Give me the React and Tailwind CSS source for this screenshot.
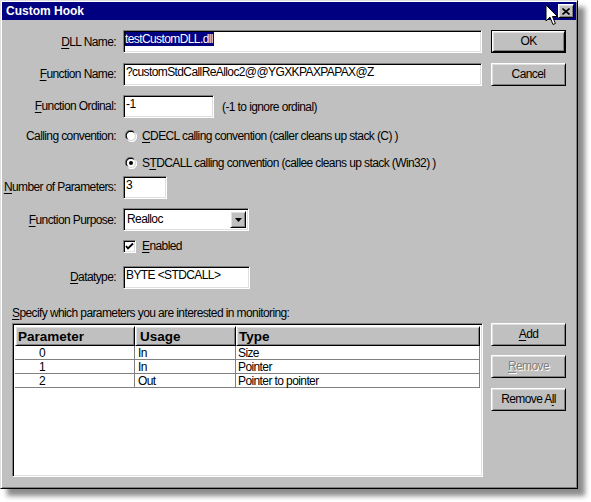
import React from 'react';

const sunken =
  'bg-white border border-t-[#808080] border-l-[#808080] border-r-white border-b-white shadow-[inset_1px_1px_0_#000,inset_-1px_-1px_0_#dfdfdf]';
const raised =
  'bg-[#c0c0c0] border border-t-white border-l-white border-r-black border-b-black shadow-[inset_1px_1px_0_#dfdfdf,inset_-1px_-1px_0_#808080]';

function U({ children }) {
  return <span className="underline underline-offset-2 decoration-1">{children}</span>;
}

function Label({ children, className = '' }) {
  return <div className={`w-[114px] shrink-0 text-right whitespace-nowrap ${className}`}>{children}</div>;
}

function Button({ children, disabled, isDefault, className = '' }) {
  const inner = (
    <div
      className={`${raised} w-full h-full flex items-center justify-center ${
        disabled ? 'text-[#808080] [text-shadow:1px_1px_0_#fff]' : 'text-black'
      }`}
    >
      {children}
    </div>
  );
  if (isDefault) {
    return <div className={`w-[75px] h-[23px] border border-black ${className}`}>{inner}</div>;
  }
  return <div className={`w-[75px] h-[23px] ${className}`}>{inner}</div>;
}

function Radio({ checked }) {
  return (
    <svg width="12" height="12" viewBox="0 0 12 12" className="shrink-0">
      <path d="M1.5 8.5 A5 5 0 0 1 8.5 1.5" stroke="#808080" strokeWidth="1.2" fill="none" />
      <path d="M2.6 8.8 A4 4 0 0 1 8.8 2.6" stroke="#000" strokeWidth="1.2" fill="none" />
      <circle cx="6" cy="6" r="4" fill="#fff" />
      <path d="M10.5 3.5 A5 5 0 0 1 3.5 10.5" stroke="#fff" strokeWidth="1.2" fill="none" />
      <path d="M9.4 3.2 A4 4 0 0 1 3.2 9.4" stroke="#dfdfdf" strokeWidth="1.2" fill="none" />
      {checked && <circle cx="6" cy="6" r="2" fill="#000" />}
    </svg>
  );
}

function Checkbox() {
  return (
    <div className={`${sunken} w-[13px] h-[13px] shrink-0 flex items-center justify-center`}>
      <svg width="9" height="9" viewBox="0 0 9 9">
        <path d="M1 4 L3 6.5 L8 1.5" stroke="#000" strokeWidth="1.8" fill="none" />
      </svg>
    </div>
  );
}

function TitleBar() {
  return (
    <div className="h-[18px] bg-[#000080] flex items-center justify-between pl-[4px] pr-[2px]">
      <span className="text-white font-bold text-[12px] tracking-normal">Custom Hook</span>
      <div className={`${raised} w-[16px] h-[14px] flex items-center justify-center`}>
        <svg width="8" height="7" viewBox="0 0 8 7">
          <path d="M0.5 0.5 L7.5 6.5 M7.5 0.5 L0.5 6.5" stroke="#000" strokeWidth="1.6" />
        </svg>
      </div>
    </div>
  );
}

const rows = [
  { p: '0', u: 'In', t: 'Size' },
  { p: '1', u: 'In', t: 'Pointer' },
  { p: '2', u: 'Out', t: 'Pointer to pointer' },
];

export default function App() {
  return (
    <div className="w-[591px] h-[502px] bg-white relative overflow-hidden font-['Liberation_Sans',Arial,sans-serif] text-[12px] tracking-[-0.6px] leading-[15px] text-black">
      <div className="w-[578px] h-[489px] bg-[#c0c0c0] border border-t-[#dfdfdf] border-l-[#dfdfdf] border-r-black border-b-black shadow-[inset_1px_1px_0_#fff,inset_-1px_-1px_0_#808080,7px_7px_5px_rgba(0,0,0,0.45)] p-[1px] flex flex-col">
        <TitleBar />

        {/* DLL name */}
        <div className="flex mt-[10px]">
          <Label className="mt-[5px]">
            <U>D</U>LL Name:
          </Label>
          <div className={`${sunken} ml-[7px] w-[359px] h-[23px] pl-[1px] pt-[1px]`}>
            <span className="bg-[#000080] text-white leading-[14px] inline-block pr-[1px]">testCustomDLL.dll</span>
          </div>
          <Button isDefault className="ml-[9px]">
            OK
          </Button>
        </div>

        {/* Function name */}
        <div className="flex mt-[10px]">
          <Label className="mt-[4px]">
            <U>F</U>unction Name:
          </Label>
          <div className={`${sunken} ml-[7px] w-[359px] h-[23px] pl-[2px] pt-[1px]`}>
            ?customStdCallReAlloc2@@YGXKPAXPAPAX@Z
          </div>
          <Button className="ml-[9px]">Cancel</Button>
        </div>

        {/* Ordinal */}
        <div className="flex mt-[9px]">
          <Label className="mt-[4px]">
            <U>F</U>unction Ordinal:
          </Label>
          <div className={`${sunken} ml-[7px] w-[91px] h-[23px] pl-[2px] pt-[1px]`}>-1</div>
          <div className="ml-[8px] mt-[5px]">(-1 to ignore ordinal)</div>
        </div>

        {/* Calling convention */}
        <div className="flex items-center h-[16px] mt-[10px]">
          <Label>Calling convention:</Label>
          <div className="ml-[9px] flex items-center">
            <Radio />
            <span className="ml-[5px]">
              <U>C</U>DECL calling convention (caller cleans up stack (C) )
            </span>
          </div>
        </div>
        <div className="flex items-center h-[16px] mt-[11px]">
          <div className="w-[114px] shrink-0" />
          <div className="ml-[9px] flex items-center">
            <Radio checked />
            <span className="ml-[5px]">
              S<U>T</U>DCALL calling convention (callee cleans up stack (Win32) )
            </span>
          </div>
        </div>

        {/* Number of params */}
        <div className="flex mt-[5px]">
          <Label className="mt-[4px]">
            <U>N</U>umber of Parameters:
          </Label>
          <div className={`${sunken} ml-[7px] w-[44px] h-[23px] pl-[2px] pt-[1px]`}>3</div>
        </div>

        {/* Purpose */}
        <div className="flex mt-[9px]">
          <Label className="mt-[5px]">
            <U>F</U>unction Purpose:
          </Label>
          <div className={`${sunken} ml-[7px] w-[126px] h-[23px] flex items-stretch p-[2px]`}>
            <div className="flex-1 pl-[1px] pt-[1px]">Realloc</div>
            <div className={`${raised} w-[16px] flex items-center justify-center`}>
              <svg width="7" height="4" viewBox="0 0 7 4">
                <path d="M0 0 H7 L3.5 4 Z" fill="#000" />
              </svg>
            </div>
          </div>
        </div>

        {/* Enabled */}
        <div className="flex items-center h-[15px] mt-[8px]">
          <div className="w-[114px] shrink-0" />
          <div className="ml-[7px] flex items-center">
            <Checkbox />
            <span className="ml-[6px]">
              <U>E</U>nabled
            </span>
          </div>
        </div>

        {/* Datatype */}
        <div className="flex mt-[12px]">
          <Label className="mt-[4px]">
            <U>D</U>atatype:
          </Label>
          <div className={`${sunken} ml-[7px] w-[127px] h-[23px] pl-[2px] pt-[1px]`}>BYTE &lt;STDCALL&gt;</div>
        </div>

        <div className="mt-[17px] ml-[10px]">
          <U>S</U>pecify which parameters you are interested in monitoring:
        </div>

        {/* List + buttons */}
        <div className="flex mt-[2px]">
          <div className={`${sunken} ml-[10px] w-[471px] h-[154px] p-[2px] flex flex-col`}>
            <div className="flex h-[20px] font-bold text-[13.5px] tracking-normal">
              <div className={`${raised} w-[120px] pl-[2px] flex items-center`}>Parameter</div>
              <div className={`${raised} w-[101px] pl-[4px] flex items-center`}>Usage</div>
              <div className={`${raised} flex-1 pl-[2px] flex items-center`}>Type</div>
            </div>
            {rows.map((r) => (
              <div key={r.p} className="flex h-[14px] leading-[14px] border-b border-[#808080]">
                <div className="w-[120px] pl-[24px] border-r border-[#808080]">{r.p}</div>
                <div className="w-[101px] pl-[3px] border-r border-[#808080]">{r.u}</div>
                <div className="flex-1 pl-[2px] border-r border-[#808080]">{r.t}</div>
              </div>
            ))}
          </div>
          <div className="ml-[8px] flex flex-col">
            <Button>
              <U>A</U>dd
            </Button>
            <Button disabled className="mt-[9px]">
              <U>R</U>emove
            </Button>
            <Button className="mt-[10px]">
              Remove A<U>l</U>l
            </Button>
          </div>
        </div>
      </div>

      {/* mouse pointer */}
      <svg width="13" height="22" viewBox="0 0 13 22" className="absolute left-[545px] top-[4px]">
        <path
          d="M1 1 L1 17 L5 13.2 L8 20.5 L10.4 19.5 L7.5 12.5 L12.5 12.5 Z"
          fill="#fff"
          stroke="#000"
          strokeWidth="1"
          strokeLinejoin="miter"
        />
      </svg>
    </div>
  );
}
